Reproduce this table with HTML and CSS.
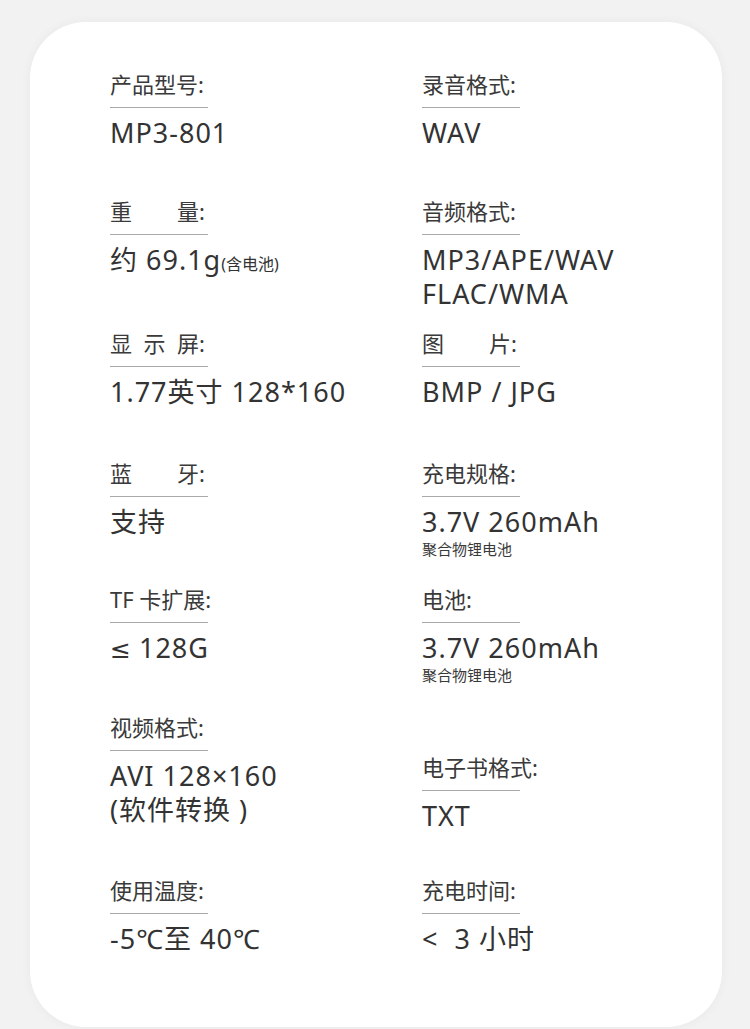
FILE: index.html
```html
<!DOCTYPE html>
<html lang="zh-CN">
<head>
<meta charset="utf-8">
<title>产品参数</title>
<link rel="stylesheet" href="styles.css">
</head>
<body>
<div class="card">
  <div class="specs">
    <div class="item"><div class="label">产品型号:</div><div class="value">MP3-801</div></div>
    <div class="item"><div class="label">录音格式:</div><div class="value">WAV</div></div>

    <div class="item"><div class="label"><span class="jt">重 量</span>:</div><div class="value">约 69.1g<span class="small">(含电池)</span></div></div>
    <div class="item"><div class="label">音频格式:</div><div class="value">MP3/APE/WAV<br>FLAC/WMA</div></div>

    <div class="item"><div class="label"><span class="jt">显 示 屏</span>:</div><div class="value">1.77英寸 128*160</div></div>
    <div class="item"><div class="label"><span class="jt">图 片</span>:</div><div class="value">BMP / JPG</div></div>

    <div class="item"><div class="label"><span class="jt">蓝 牙</span>:</div><div class="value">支持</div></div>
    <div class="item"><div class="label">充电规格:</div><div class="value">3.7V 260mAh</div><div class="note">聚合物锂电池</div></div>

    <div class="item"><div class="label">TF 卡扩展:</div><div class="value"><span class="sym">≤</span> 128G</div></div>
    <div class="item"><div class="label">电池:</div><div class="value">3.7V 260mAh</div><div class="note">聚合物锂电池</div></div>

    <div class="item"><div class="label">视频格式:</div><div class="value">AVI 128×160<br>(软件转换 )</div></div>
    <div class="item item-low"><div class="label">电子书格式:</div><div class="value">TXT</div></div>

    <div class="item"><div class="label">使用温度:</div><div class="value">-5℃至 40℃</div></div>
    <div class="item"><div class="label">充电时间:</div><div class="value">&lt;&nbsp;&nbsp;3 小时</div></div>
  </div>
</div>
</body>
</html>
```

FILE: styles.css
```css
html, body {
  margin: 0;
  padding: 0;
}
body {
  background: #f2f2f2;
  font-family: "Noto Sans", "Noto Sans CJK SC", sans-serif;
  color: #333;
  padding: 22px 28px 2px 30px;
}
.card {
  background: #fff;
  border-radius: 56px;
  box-shadow: 0 0 8px 2px rgba(0, 0, 0, 0.03);
  height: 1005px;
  box-sizing: border-box;
  padding: 48px 0 0 80px;
}
.specs {
  display: grid;
  grid-template-columns: 312px 300px;
  grid-template-rows: 127px 132px 130px 126px 128px 163px auto;
}
.item {
  display: flex;
  flex-direction: column;
  align-items: flex-start;
}
.item-low {
  margin-top: 40px;
}
.label {
  width: 98px;
  font-size: 22px;
  line-height: 28px;
  padding-bottom: 9px;
  border-bottom: 1px solid #aaa;
  white-space: nowrap;
  color: #3a3a3a;
}
.jt {
  display: inline-block;
  width: 89px;
  text-align: justify;
  text-align-last: justify;
  vertical-align: top;
}
.value {
  margin-top: 8px;
  font-size: 27px;
  line-height: 34px;
  letter-spacing: 1px;
  white-space: nowrap;
}
.sym {
  font-family: "DejaVu Sans", sans-serif;
  font-size: 25px;
  letter-spacing: 0;
}
.small {
  font-size: 16px;
  letter-spacing: 0;
}
.note {
  font-size: 15px;
  line-height: 20px;
  color: #3a3a3a;
}
```
